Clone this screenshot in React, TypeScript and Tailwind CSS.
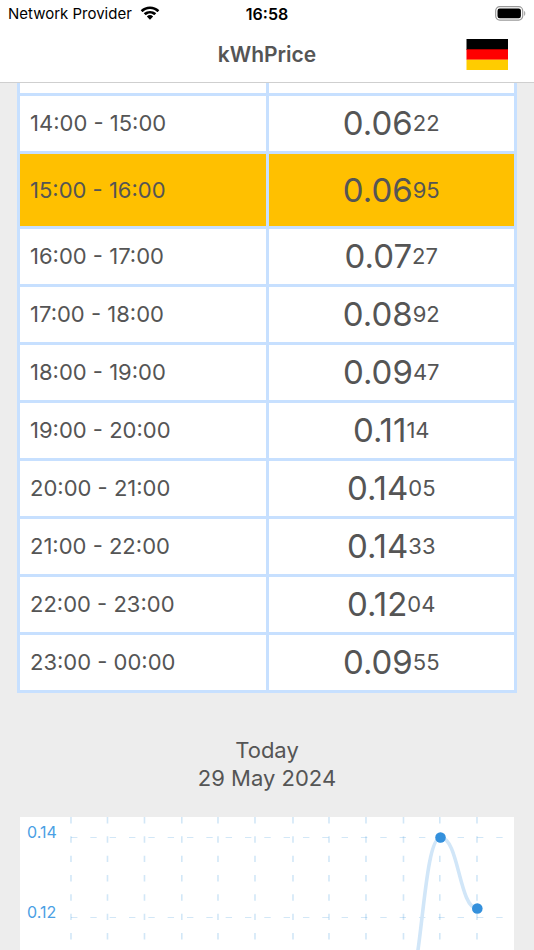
import React from 'react'

const prices = [
  { time: '14:00 - 15:00', main: '0.06', rest: '22' },
  { time: '15:00 - 16:00', main: '0.06', rest: '95', current: true },
  { time: '16:00 - 17:00', main: '0.07', rest: '27' },
  { time: '17:00 - 18:00', main: '0.08', rest: '92' },
  { time: '18:00 - 19:00', main: '0.09', rest: '47' },
  { time: '19:00 - 20:00', main: '0.11', rest: '14' },
  { time: '20:00 - 21:00', main: '0.14', rest: '05' },
  { time: '21:00 - 22:00', main: '0.14', rest: '33' },
  { time: '22:00 - 23:00', main: '0.12', rest: '04' },
  { time: '23:00 - 00:00', main: '0.09', rest: '55' },
]

const gridX = [51, 87.5, 124.5, 161.8, 198, 235, 273, 309, 346, 383.5, 419.8, 457]

const StatusBar = () => (
  <div className="grid grid-cols-[1fr_auto_1fr] items-center h-7 px-2 text-black">
    <div className="flex items-center gap-2 text-[15px]">
      <span>Network Provider</span>
      <svg width="20" height="16" viewBox="0 0 20 16" aria-hidden="true">
        <path d="M10 3.1c2.8 0 5.3 1.1 7.2 2.8.1.1.3.1.5 0l1.4-1.4c.2-.2.2-.4 0-.6C16.7 1.7 13.5.4 10 .4S3.3 1.7.9 3.9c-.2.2-.2.4 0 .6l1.4 1.4c.2.1.4.1.5 0C4.7 4.2 7.2 3.1 10 3.1z" />
        <path d="M10 7.6c1.5 0 2.9.6 4 1.5.2.1.4.1.5 0l1.5-1.5c.2-.2.2-.4 0-.6C14.4 5.7 12.3 4.9 10 4.9S5.6 5.7 4 7c-.2.2-.2.4 0 .6l1.5 1.5c.1.1.3.1.5 0 1.1-.9 2.5-1.5 4-1.5z" />
        <path d="M12.9 10.2c.2.2.2.4 0 .6l-2.6 2.7c-.2.2-.4.2-.6 0l-2.6-2.7c-.2-.2-.2-.4 0-.6.8-.7 1.8-1.1 2.9-1.1s2.1.4 2.9 1.1z" />
      </svg>
    </div>
    <span className="font-semibold">16:58</span>
    <svg className="justify-self-end" width="31" height="16" viewBox="0 0 31 16" aria-hidden="true">
      <rect x="0.7" y="0.7" width="27" height="13.4" rx="4" fill="none" stroke="#999" strokeWidth="1.2" />
      <rect x="2.5" y="2.5" width="23.4" height="9.8" rx="2.2" />
      <path d="M29.2 5c1.4.5 1.4 4.3 0 4.8z" fill="#999" />
    </svg>
  </div>
)

const Header = () => (
  <header className="bg-white border-b border-[#cfcfcf]">
    <StatusBar />
    <div className="grid grid-cols-[1fr_auto_1fr] items-center h-[54px] px-[26px]">
      <h1 className="col-start-2 text-[21px] leading-7 font-semibold">kWhPrice</h1>
      <button type="button" aria-label="Germany" className="justify-self-end">
        <svg width="42" height="32" viewBox="0 0 42 32" aria-hidden="true">
          <rect x="0.5" width="41.5" height="11" fill="#000" />
          <rect x="0.5" y="10.3" width="41.5" height="10.5" fill="#f00" />
          <rect x="0.5" y="20.7" width="41.5" height="10.3" fill="#fc0" />
        </svg>
      </button>
    </div>
  </header>
)

const PriceTable = () => (
  <table className="w-full table-fixed border-collapse bg-white">
    <tbody>
      <tr className="h-[11px]">
        <td className="border-[3px] border-t-0 border-[#c7e0ff] p-0"></td>
        <td className="border-[3px] border-t-0 border-[#c7e0ff] p-0"></td>
      </tr>
      {prices.map((p) => (
        <tr key={p.time} className={p.current ? 'h-[75px] bg-[#ffc000]' : 'h-[58px]'}>
          <th scope="row" className="border-[3px] border-[#c7e0ff] p-0 pl-2.5 text-left text-[22px] leading-7 font-normal">
            {p.time}
          </th>
          <td className="border-[3px] border-[#c7e0ff] p-0">
            <div className="flex items-center justify-center">
              <span className="text-[33px] leading-10">{p.main}</span>
              <span className="text-[22px] leading-7">{p.rest}</span>
            </div>
          </td>
        </tr>
      ))}
    </tbody>
  </table>
)

const Chart = () => (
  <svg className="block w-full bg-white" viewBox="0 0 494 133" role="img" aria-label="Prices today">
    <g stroke="#3490dc" strokeOpacity="0.22" strokeDasharray="6.4 12.93">
      {gridX.map((x) => (
        <path key={x} d={`M${x} 0V133`} strokeWidth="1.6" />
      ))}
      <path d="M51 20.5H484M51 100.5H484" strokeWidth="1.2" />
    </g>
    <g fill="#4aa0e4" fontSize="16">
      <text x="7" y="21">0.14</text>
      <text x="7" y="101">0.12</text>
    </g>
    <path
      d="M383.6 180.5C402 180.5 402 20.5 420.5 20.5C439 20.5 439 91.5 457.3 91.5"
      fill="none"
      stroke="#d1e6f8"
      strokeWidth="3.6"
    />
    <circle cx="420.5" cy="20.5" r="5.3" fill="#3490dc" />
    <circle cx="457.3" cy="91.5" r="5.3" fill="#3490dc" />
  </svg>
)

const App = () => {
  return (
    <div className="min-h-screen bg-[#ededed] text-[#555] font-['Inter','Liberation_Sans',sans-serif]">
      <Header />
      <main>
        <div className="px-[17px]">
          <PriceTable />
        </div>
        <h2 className="pt-[43px] pb-[25px] text-center text-[22px] leading-7">
          Today
          <br />
          29 May 2024
        </h2>
        <div className="px-5">
          <Chart />
        </div>
      </main>
    </div>
  )
}

export default App
